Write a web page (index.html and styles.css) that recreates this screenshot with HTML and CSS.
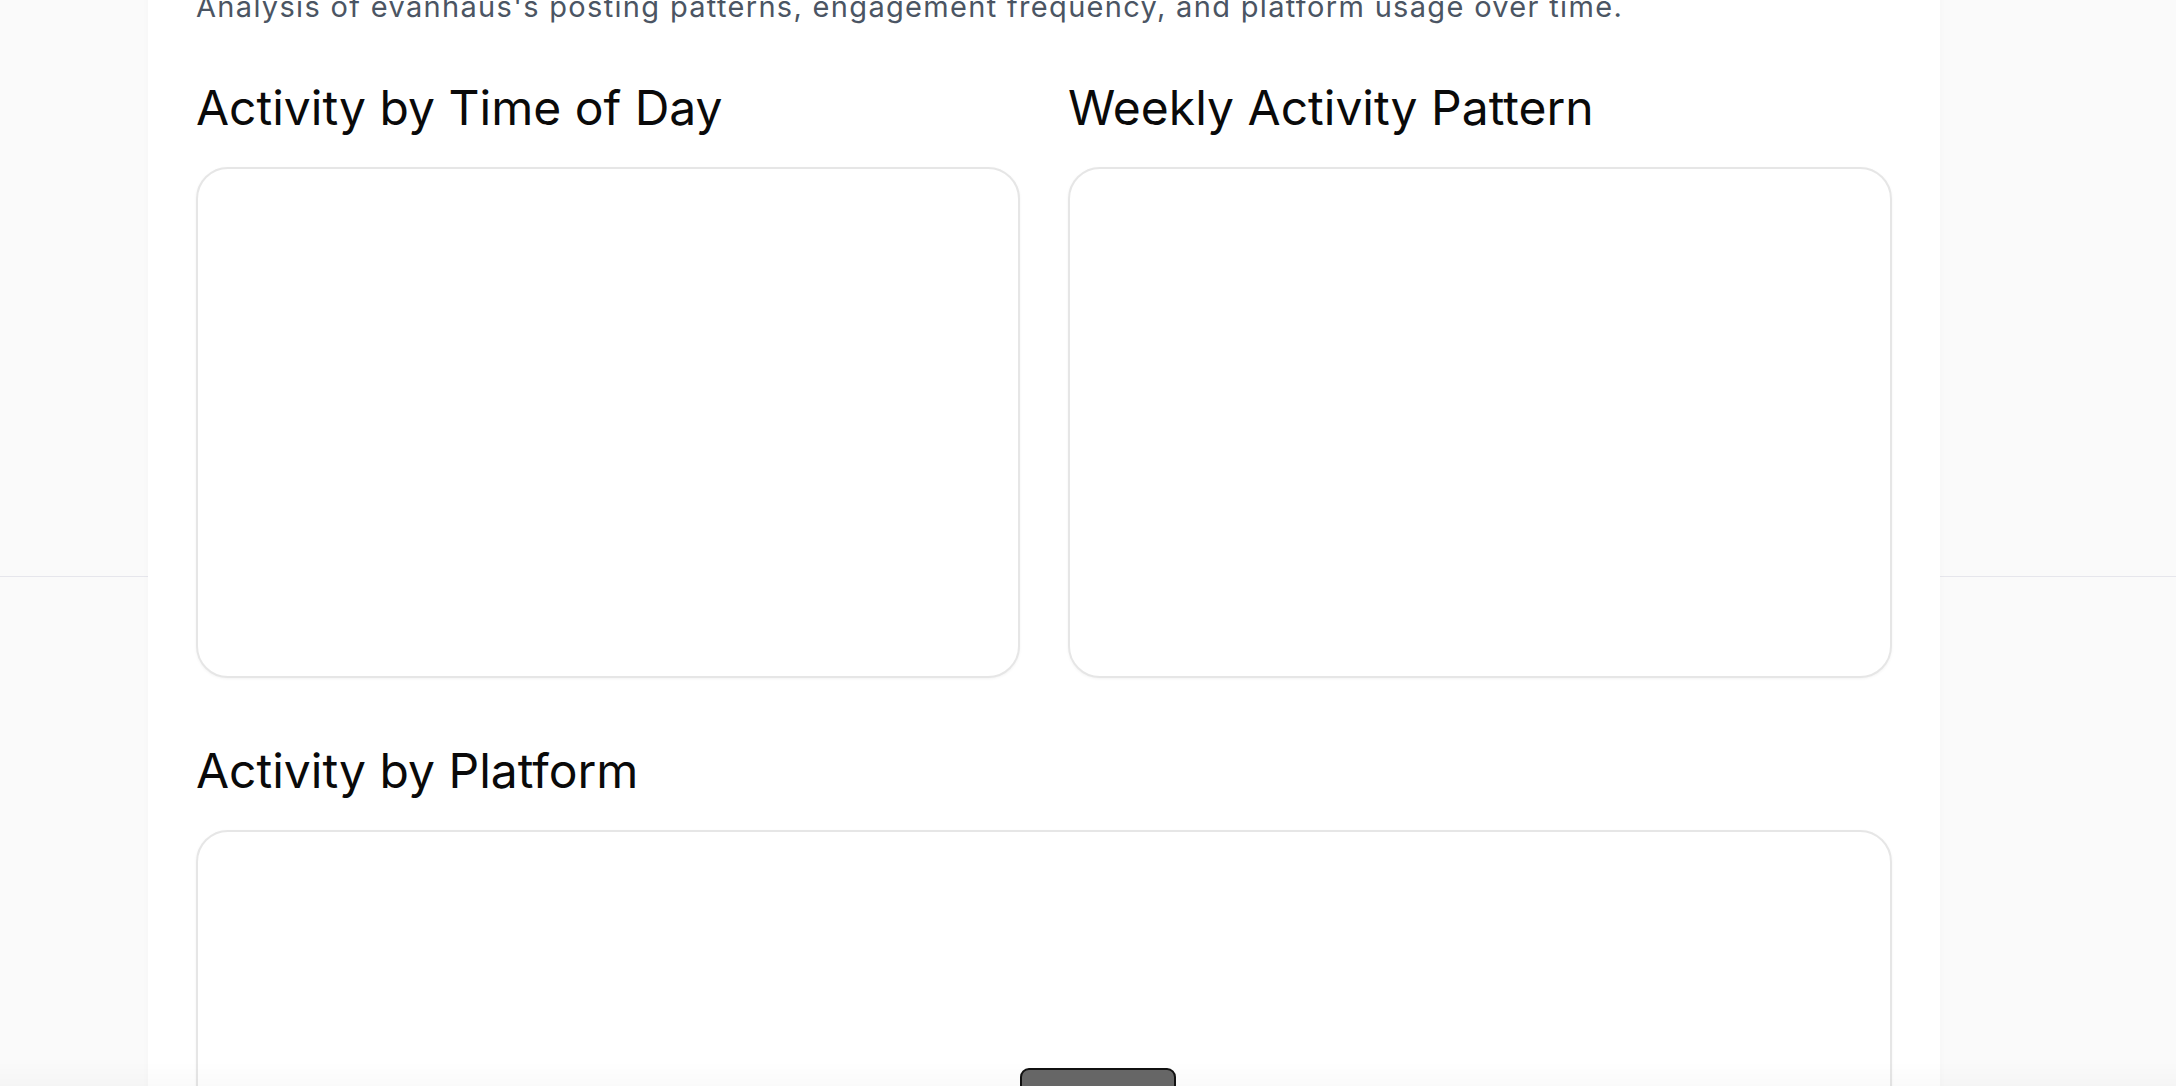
FILE: index.html
```html
<!DOCTYPE html>
<html lang="en">
<head>
<meta charset="utf-8">
<title>Activity Analysis</title>
<link rel="stylesheet" href="styles.css">
</head>
<body>
<main class="page">
  <p class="intro">Analysis of evanhaus's posting patterns, engagement frequency, and platform usage over time.</p>
  <div class="grid">
    <section class="panel">
      <h2 class="title">Activity by Time of Day</h2>
      <div class="card card-half"></div>
    </section>
    <section class="panel">
      <h2 class="title">Weekly Activity Pattern</h2>
      <div class="card card-half"></div>
    </section>
  </div>
  <section class="panel panel-wide">
    <h2 class="title">Activity by Platform</h2>
    <div class="card card-wide"></div>
  </section>
</main>
<div class="fade"></div>
<button class="float-btn" type="button">Load all</button>
</body>
</html>
```

FILE: styles.css
```css
html, body {
  margin: 0;
  padding: 0;
}
body {
  height: 1086px;
  overflow: hidden;
  background:
    linear-gradient(to bottom, transparent 576px, #e6e6ec 576px, #e6e6ec 577.5px, transparent 577.5px),
    #fafafa;
  font-family: "Inter", "Liberation Sans", sans-serif;
}
.page {
  box-sizing: border-box;
  width: 1792px;
  margin-left: 148px;
  padding: 0 48px 200px;
  background: #fff;
  box-shadow: 0 0 8px rgba(0, 0, 0, 0.025);
  min-height: 1200px;
}
.intro {
  margin: -14px 0 0;
  font-size: 29px;
  line-height: 42px;
  letter-spacing: 1.32px;
  color: #4b5563;
  white-space: nowrap;
}
.grid {
  display: grid;
  grid-template-columns: 1fr 1fr;
  gap: 48px;
  margin-top: 50px;
}
.title {
  margin: 0;
  font-family: "Inter", "Liberation Sans", sans-serif;
  font-weight: 400;
  font-size: 48px;
  line-height: 60px;
  color: #0a0a0a;
  letter-spacing: 0;
}
.card {
  box-sizing: border-box;
  margin-top: 29px;
  border: 2px solid #e6e6e6;
  border-radius: 32px;
  background: #fff;
  box-shadow: 0 1px 3px rgba(0, 0, 0, 0.05);
}
.card-half {
  height: 511px;
}
.panel-wide {
  margin-top: 63px;
}
.card-wide {
  height: 600px;
}
.fade {
  position: fixed;
  left: 0;
  right: 0;
  bottom: 0;
  height: 24px;
  background: linear-gradient(to bottom, rgba(0, 0, 0, 0), rgba(0, 0, 0, 0.018));
  pointer-events: none;
}
.float-btn {
  position: fixed;
  left: 1020px;
  top: 1068px;
  box-sizing: border-box;
  width: 156px;
  height: 44px;
  padding: 12px 0 0;
  background: #666;
  border: 2px solid #111;
  border-radius: 9px;
  color: #fff;
  font-family: "Inter", "Liberation Sans", sans-serif;
  font-size: 18px;
  line-height: 22px;
  text-align: center;
}
```
